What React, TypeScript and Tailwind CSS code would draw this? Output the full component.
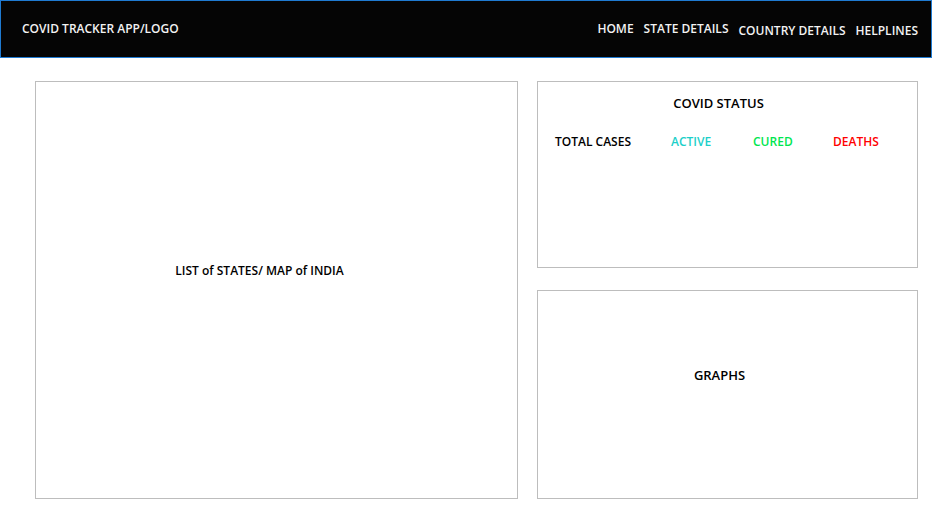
export default function App() {
  return (
    <div className="min-h-[524px] w-[932px] bg-white font-['Open_Sans',sans-serif]">
      {/* top bar */}
      <header className="flex h-[58px] items-center justify-between border border-[#1f7ad1] bg-[#050505] pl-[21px] pr-[13px] pt-[2px] text-[12px] font-semibold text-[#f2f2f2]">
        <div className="pb-[2px]">COVID TRACKER APP/LOGO</div>
        <nav className="flex items-center">
          <span className="pb-[2px]">HOME</span>
          <span className="ml-[10px] pb-[2px]">STATE DETAILS</span>
          <span className="ml-[10px] pt-[2px]">COUNTRY DETAILS</span>
          <span className="ml-[10px] pt-[2px]">HELPLINES</span>
        </nav>
      </header>

      <main className="flex gap-[19px] pl-[35px] pt-[23px]">
        {/* states / map */}
        <section className="flex h-[418px] w-[483px] justify-center border border-[#bdbdbd] pr-[34px] pt-[180px] text-[12px] font-semibold text-black">
          LIST of STATES/ MAP of INDIA
        </section>

        <div className="flex w-[381px] flex-col gap-[22px]">
          {/* status */}
          <section className="h-[187px] border border-[#bdbdbd] text-black">
            <h2 className="mt-[12px] pr-[18px] text-center text-[13px] font-semibold">COVID STATUS</h2>
            <div className="mt-[19px] flex text-[12px] font-semibold">
              <span className="ml-[17px] w-[116px]">TOTAL CASES</span>
              <span className="w-[82px] text-[#1ccfc9]">ACTIVE</span>
              <span className="w-[80px] text-[#00e650]">CURED</span>
              <span className="text-[#ff0000]">DEATHS</span>
            </div>
          </section>

          {/* graphs */}
          <section className="flex h-[209px] justify-center border border-[#bdbdbd] pr-[16px] pt-[75px] text-[13px] font-semibold text-black">
            GRAPHS
          </section>
        </div>
      </main>
    </div>
  )
}
